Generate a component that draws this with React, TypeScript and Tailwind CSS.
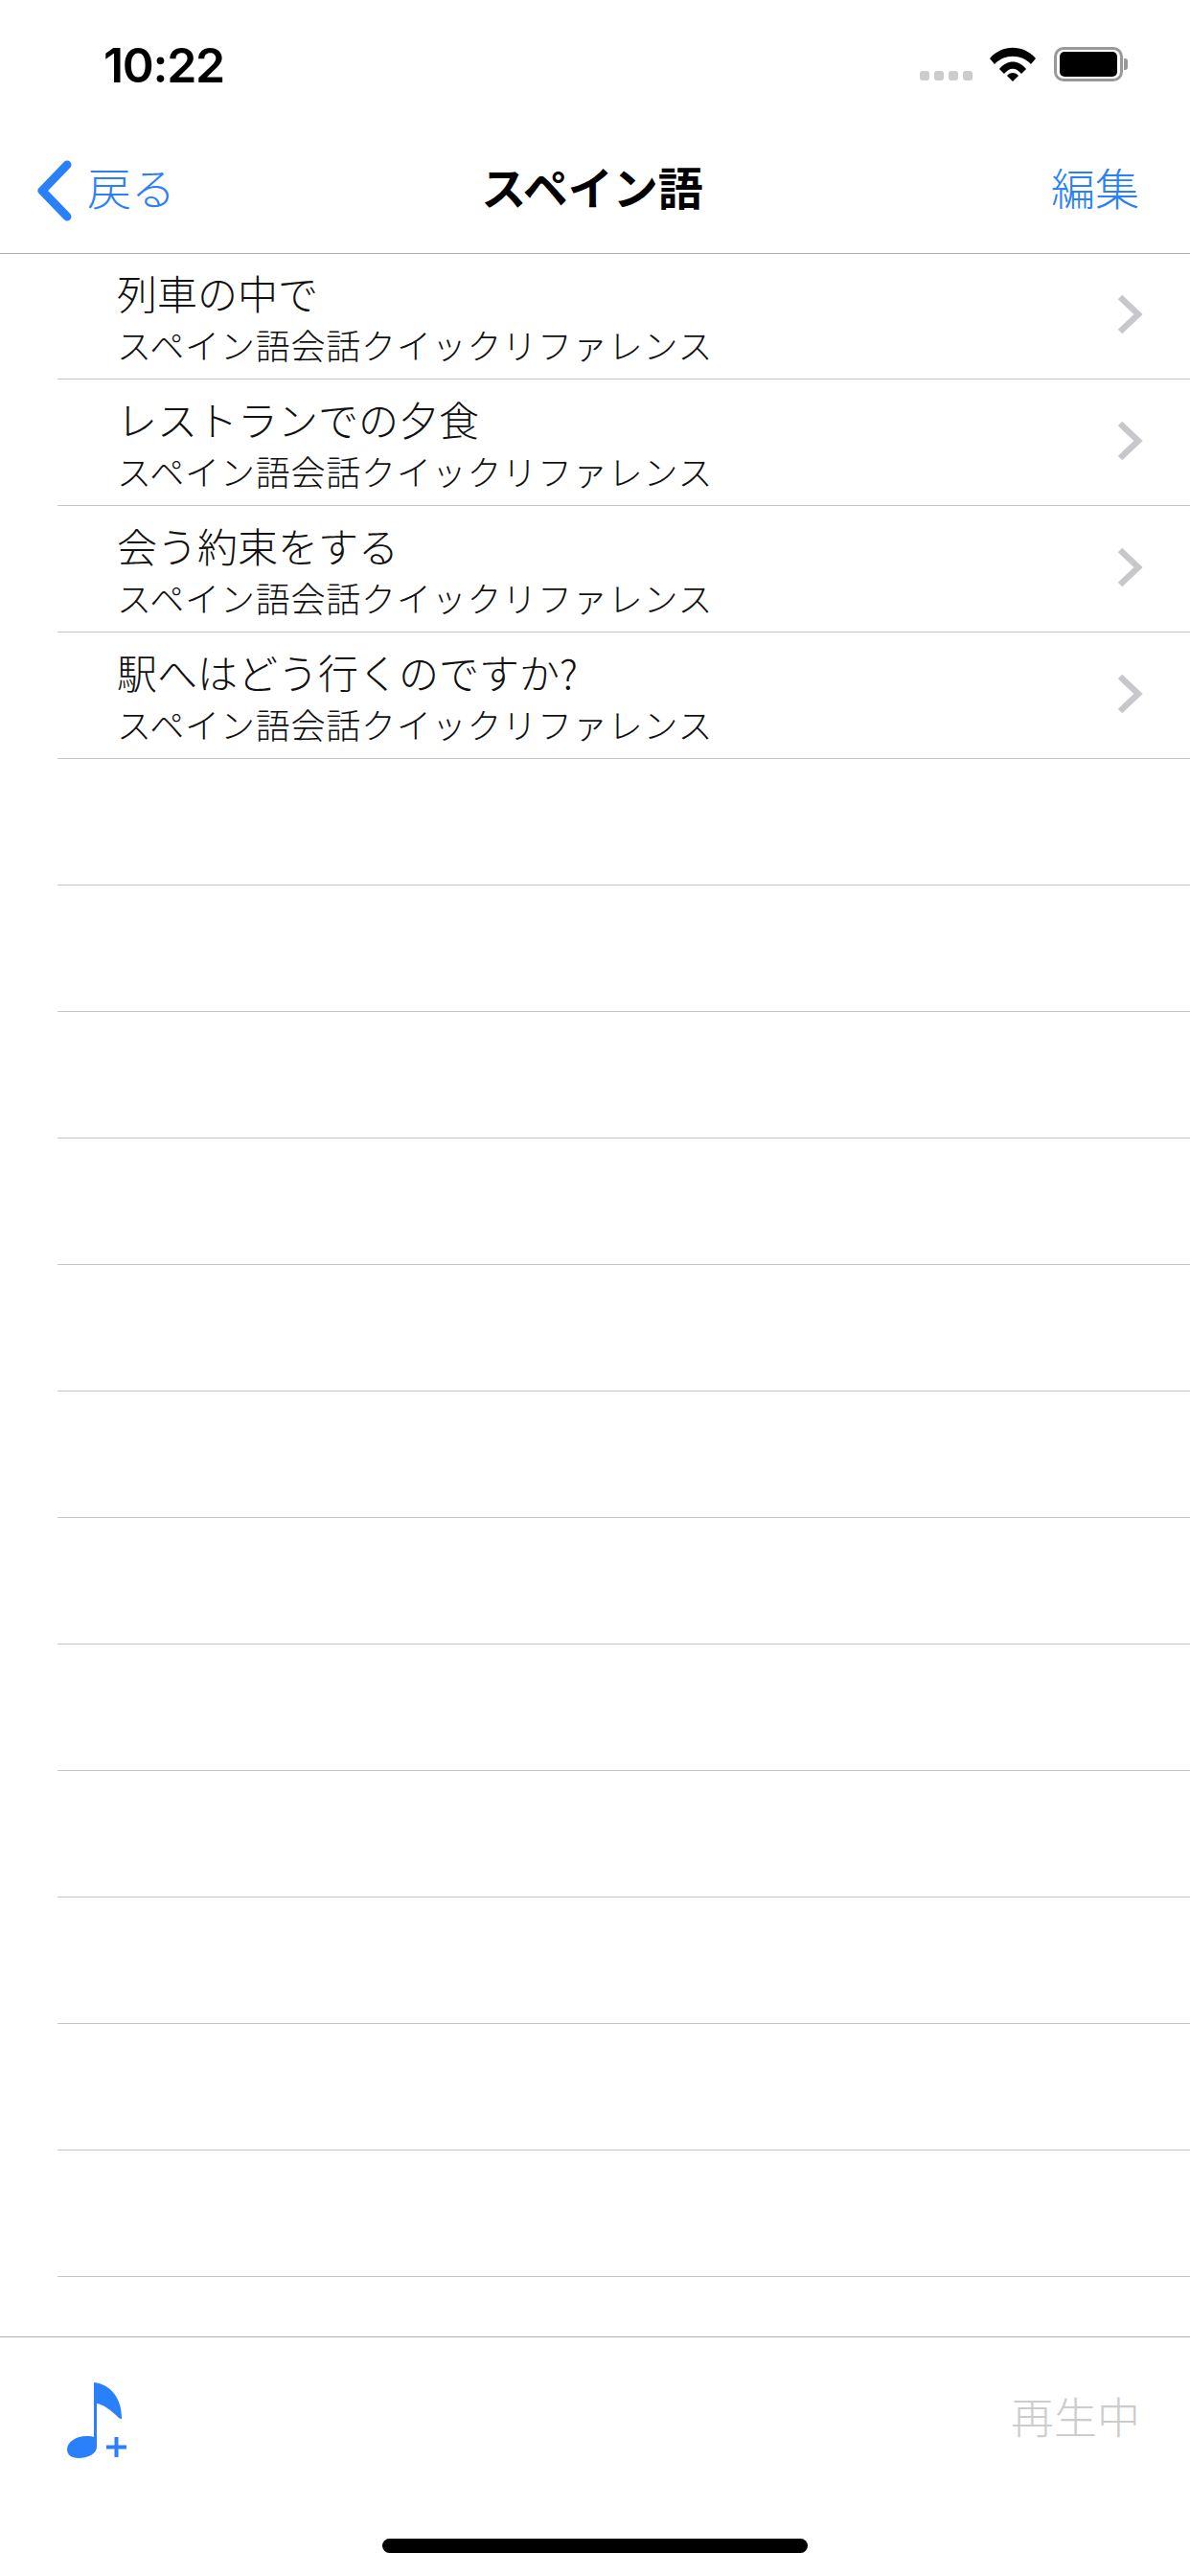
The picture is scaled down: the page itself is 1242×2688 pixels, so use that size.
const FONT = "font-['Noto_Sans_CJK_JP',sans-serif]";

const TITLES = ["列車の中で", "レストランでの夕食", "会う約束をする", "駅へはどう行くのですか?"];
const EMPTY_ROWS = Array.from({ length: 12 }, (_, i) => i);

function Row({ title }: { title: string }) {
  return (
    <div className="ml-[60px] flex h-[132px] shrink-0 items-center border-b border-[#c4c4c6] pr-[49px] pl-[62px]">
      <div className="flex-1 self-start pt-[14px] text-[#111111]">
        <div className="h-[54px] text-[42px] leading-[54px] font-light">{title}</div>
        <div className="h-[54px] text-[36px] leading-[54px] font-light tracking-[0.8px]">
          スペイン語会話クイックリファレンス
        </div>
      </div>
      <svg width="28" height="44" viewBox="0 0 28 44" fill="none" className="-mt-1">
        <path d="M4 4 L23 22 L4 40" stroke="#c7c7cc" strokeWidth="6.5" />
      </svg>
    </div>
  );
}

function StatusBar() {
  return (
    <div className="flex h-[132px] shrink-0 items-start justify-between pt-[44px] pr-[65px] pl-[108px]">
      <span className="font-['Inter',sans-serif] text-[50px] leading-[48px] font-semibold tracking-[-1.3px] text-black">
        10:22
      </span>
      <div className="flex items-end pt-[5px]">
        <div className="mb-[1px] flex gap-[5px]">
          {[0, 1, 2, 3].map((i) => (
            <div key={i} className="h-[10px] w-[10px] rounded-[3px] bg-[#cccccc]" />
          ))}
        </div>
        <svg width="48" height="36" viewBox="0 0 48 36" className="ml-[18px]">
          <path d="M0 12 C13 -3 35 -3 48 12 L43 18 C33 7 15 7 5 18 Z" fill="#000" />
          <path d="M10 23 C18 13 30 13 38 23 L33 28 C27 21 21 21 15 28 Z" fill="#000" />
          <path d="M24 36 L18 30 C21 26 27 26 30 30 Z" fill="#000" />
        </svg>
        <div className="ml-[19px] flex items-center">
          <div className="flex h-[36px] w-[72px] items-center justify-center rounded-[10px] border-[3px] border-[#999999]">
            <div className="h-[26px] w-[60px] rounded-[5px] bg-black" />
          </div>
          <div className="ml-[1px] h-[12px] w-[4px] rounded-r-[3px] bg-[#999999]" />
        </div>
      </div>
    </div>
  );
}

export default function App() {
  return (
    <div className={`flex h-[2688px] w-[1242px] flex-col overflow-hidden bg-white ${FONT}`}>
      <StatusBar />

      {/* Nav bar */}
      <div className="grid h-[133px] shrink-0 grid-cols-[1fr_auto_1fr] items-center border-b border-[#aeaeae] pr-[53px] pl-[38px] text-[#2a7ffb]">
        <div className="flex items-center">
          <svg width="38" height="64" viewBox="0 0 38 64" fill="none" className="mt-[1px]">
            <path d="M32 5 L6 32 L32 59" stroke="#2a7ffb" strokeWidth="9" strokeLinecap="round" strokeLinejoin="round" />
          </svg>
          <span className="mt-[-9px] ml-[15px] text-[46px] leading-none font-light">戻る</span>
        </div>
        <div className="mt-[-9px] ml-[9px] text-[47px] leading-none font-bold text-black">スペイン語</div>
        <div className="mt-[-9px] text-right text-[46px] leading-none font-light">編集</div>
      </div>

      {/* List */}
      <div className="-mt-px flex flex-1 flex-col overflow-hidden">
        {TITLES.map((t) => (
          <Row key={t} title={t} />
        ))}
        {EMPTY_ROWS.map((i) => (
          <div key={i} className="ml-[60px] h-[132px] shrink-0 border-b border-[#c4c4c6]" />
        ))}
      </div>

      {/* Toolbar */}
      <div className="relative h-[250px] shrink-0 border-t border-[#aeaeae]">
        <div className="flex items-start justify-between pt-[47px] pr-[52px] pl-[70px]">
          <svg width="62" height="80" viewBox="0 0 62 80" fill="#2a7ffb">
            <path d="M28 0 C46 2 57 17 57 37 C57 39 56 38 54 37 C46 29 38 23 31 22 L31 67 C31 75 21 79 12 79 C4 79 0 75 0 70 C0 62 10 56 20 56 C24 56 27 56 28 57 Z" />
            <rect x="41" y="65.5" width="21" height="4" />
            <rect x="49.5" y="57" width="4" height="21" />
          </svg>
          <span className="mt-[8px] text-[45px] leading-[54px] font-light text-[#cccccc]">再生中</span>
        </div>
        <div className="absolute bottom-[24px] left-[399px] h-[15px] w-[444px] rounded-full bg-black" />
      </div>
    </div>
  );
}
